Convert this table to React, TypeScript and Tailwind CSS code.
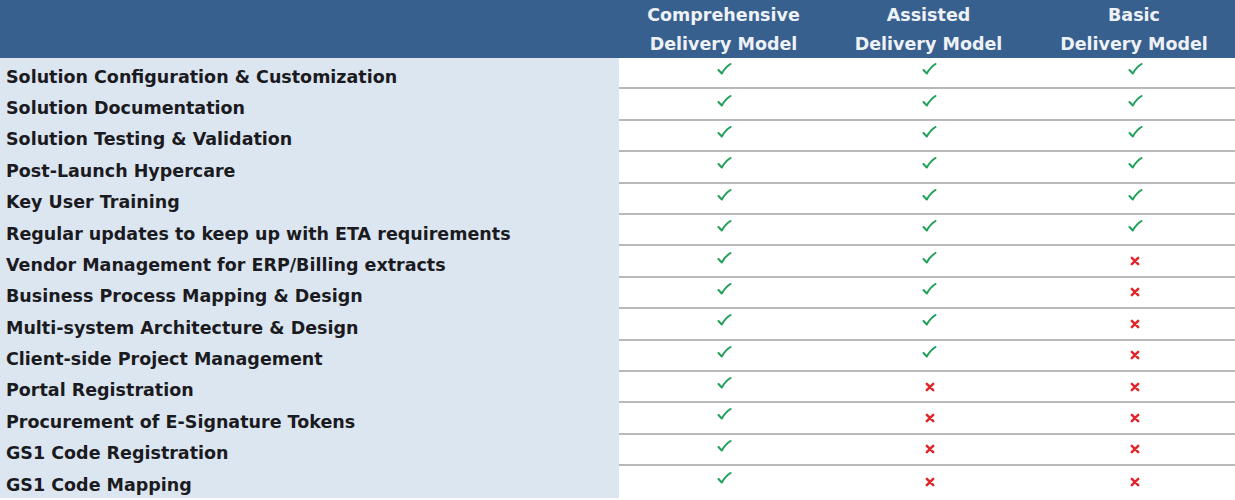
const rows: [string, boolean, boolean, boolean][] = [
  ['Solution Configuration & Customization', true, true, true],
  ['Solution Documentation', true, true, true],
  ['Solution Testing & Validation', true, true, true],
  ['Post-Launch Hypercare', true, true, true],
  ['Key User Training', true, true, true],
  ['Regular updates to keep up with ETA requirements', true, true, true],
  ['Vendor Management for ERP/Billing extracts', true, true, false],
  ['Business Process Mapping & Design', true, true, false],
  ['Multi-system Architecture & Design', true, true, false],
  ['Client-side Project Management', true, true, false],
  ['Portal Registration', true, false, false],
  ['Procurement of E-Signature Tokens', true, false, false],
  ['GS1 Code Registration', true, false, false],
  ['GS1 Code Mapping', true, false, false],
]

const models = [
  ['Comprehensive', 'Delivery Model'],
  ['Assisted', 'Delivery Model'],
  ['Basic', 'Delivery Model'],
]

function Check() {
  return (
    <svg width="15" height="12" viewBox="0 0 15 12" className="-mt-[7px]">
      <path d="M1.5 7 L4.8 10.5 C7 6.5 9.8 3.2 13.5 1" fill="none" stroke="#21a05b" strokeWidth="2" strokeLinecap="round" strokeLinejoin="round" />
    </svg>
  )
}

function Cross() {
  return (
    <svg width="10" height="10" viewBox="0 0 10 10">
      <path d="M1.8 1.8 L8.2 8.2 M8.2 1.8 L1.8 8.2" fill="none" stroke="#e3262b" strokeWidth="2.5" strokeLinecap="round" />
    </svg>
  )
}

export default function App() {
  return (
    <div className="w-[1235px] h-[500px] bg-white" style={{ fontFamily: '"DejaVu Sans", "Open Sans", sans-serif' }}>
      <div className="grid grid-cols-[619px_205px_205px_206px] h-[58px] bg-[#38608f] text-[#eef2f7] font-bold text-[17.5px]">
        <div />
        {models.map(([a, b]) => (
          <div key={a} className="flex flex-col items-center justify-center leading-[29px] pl-[4px] pt-[1px]">
            <span>{a}</span>
            <span>{b}</span>
          </div>
        ))}
      </div>
      <div className="grid grid-cols-[619px_616px]">
        <div className="bg-[#dce6f1] flex flex-col h-[440px]">
          {rows.map(([label]) => (
            <div key={label} className="h-[31.4px] flex items-center pl-[6px] pt-[6px] text-[17.5px] font-bold text-[#1b1b1f]">
              {label}
            </div>
          ))}
        </div>
        <div className="flex flex-col h-[440px]">
          {rows.map(([label, a, b, c], i) => (
            <div
              key={label}
              className={
                'h-[31.4px] grid grid-cols-[205px_205px_206px] ' +
                (i < rows.length - 1 ? 'border-b-2 border-[#b9b9b9]' : '')
              }
            >
              {[a, b, c].map((v, j) => (
                <div key={j} className="flex items-center justify-center pl-[6px]">
                  {v ? <Check /> : <Cross />}
                </div>
              ))}
            </div>
          ))}
        </div>
      </div>
    </div>
  )
}
